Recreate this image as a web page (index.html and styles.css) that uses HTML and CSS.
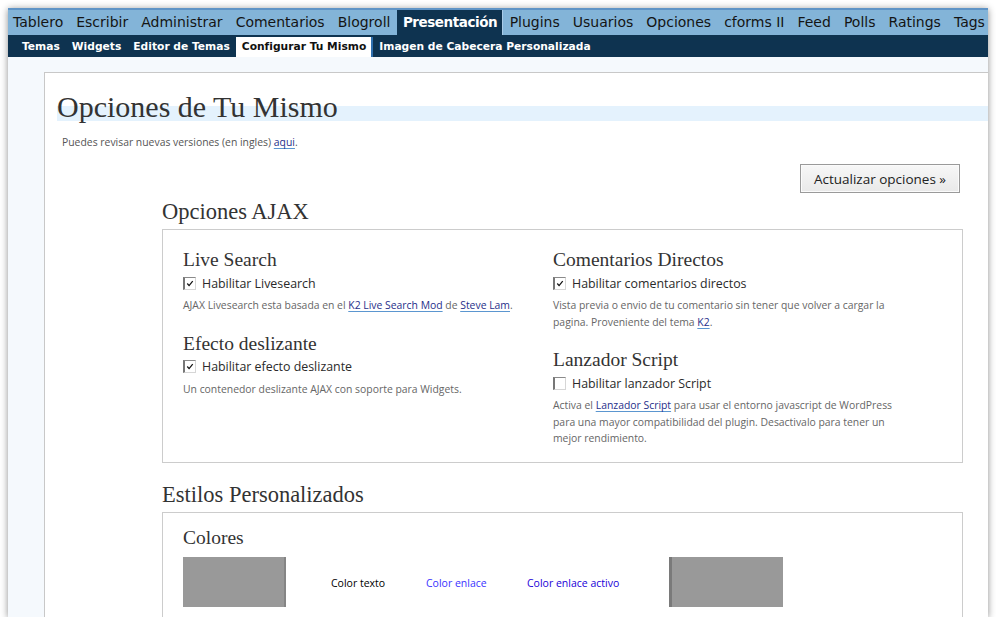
FILE: index.html
```html
<!DOCTYPE html>
<html lang="es">
<head>
<meta charset="utf-8">
<title>Opciones de Tu Mismo</title>
<link rel="stylesheet" href="styles.css">
</head>
<body>
<div class="window">
  <nav class="topnav">
    <a>Tablero</a><a>Escribir</a><a>Administrar</a><a>Comentarios</a><a>Blogroll</a><a class="current">Presentación</a><a>Plugins</a><a>Usuarios</a><a>Opciones</a><a>cforms II</a><a>Feed</a><a>Polls</a><a>Ratings</a><a>Tags</a>
  </nav>
  <nav class="subnav">
    <a>Temas</a><a>Widgets</a><a>Editor de Temas</a><a class="current">Configurar Tu Mismo</a><a>Imagen de Cabecera Personalizada</a>
  </nav>
  <div class="page">
    <div class="panel">
      <h2>Opciones de Tu Mismo</h2>
      <p class="intro">Puedes revisar nuevas versiones (en ingles) <a class="link">aqui</a>.</p>
      <div class="content">
        <div class="actions"><button class="btn">Actualizar opciones »</button></div>

        <h3>Opciones AJAX</h3>
        <div class="box ajax">
          <div class="col">
            <div class="section">
              <h4>Live Search</h4>
              <label class="check"><span class="cb on"><svg viewBox="0 0 11 11" width="11" height="11"><path d="M2.5 5.5 L4.5 7.8 L8.5 2.8" fill="none" stroke="#111" stroke-width="1.4"/></svg></span>Habilitar Livesearch</label>
              <p class="desc">AJAX Livesearch esta basada en el <a class="link">K2 Live Search Mod</a> de <a class="link">Steve Lam</a>.</p>
            </div>
            <div class="section">
              <h4>Efecto deslizante</h4>
              <label class="check"><span class="cb on"><svg viewBox="0 0 11 11" width="11" height="11"><path d="M2.5 5.5 L4.5 7.8 L8.5 2.8" fill="none" stroke="#111" stroke-width="1.4"/></svg></span>Habilitar efecto deslizante</label>
              <p class="desc">Un contenedor deslizante AJAX con soporte para Widgets.</p>
            </div>
          </div>
          <div class="col">
            <div class="section">
              <h4>Comentarios Directos</h4>
              <label class="check"><span class="cb on"><svg viewBox="0 0 11 11" width="11" height="11"><path d="M2.5 5.5 L4.5 7.8 L8.5 2.8" fill="none" stroke="#111" stroke-width="1.4"/></svg></span>Habilitar comentarios directos</label>
              <p class="desc">Vista previa o envio de tu comentario sin tener que volver a cargar la pagina. Proveniente del tema <a class="link">K2</a>.</p>
            </div>
            <div class="section">
              <h4>Lanzador Script</h4>
              <label class="check"><span class="cb"></span>Habilitar lanzador Script</label>
              <p class="desc">Activa el <a class="link">Lanzador Script</a> para usar el entorno javascript de WordPress para una mayor compatibilidad del plugin. Desactivalo para tener un mejor rendimiento.</p>
            </div>
          </div>
        </div>

        <h3>Estilos Personalizados</h3>
        <div class="box styles">
          <h4>Colores</h4>
          <div class="colors">
            <div class="cell"><span class="swatch first"></span></div>
            <div class="cell label text">Color texto</div>
            <div class="cell label linkc">Color enlace</div>
            <div class="cell label active">Color enlace activo</div>
            <div class="cell"><span class="swatch last"></span></div>
          </div>
        </div>
      </div>
    </div>
  </div>
</div>
</body>
</html>
```
FILE: styles.css
```css
html, body {
  margin: 0;
  padding: 0;
  background: #ffffff;
}

.window {
  margin: 8px 0 0 8px;
  width: 980px;
  height: 609px;
  overflow: hidden;
  background: #f5f9fd;
  box-shadow: 0 1px 7px rgba(0, 0, 0, 0.45);
  font-family: "Open Sans", "DejaVu Sans", sans-serif;
}

/* top navigation */
.topnav {
  display: flex;
  height: 25px;
  border-top: 2px solid #5f94c6;
  background: #83b4d8;
  font-family: "DejaVu Sans", sans-serif;
  font-size: 14px;
  line-height: 25px;
}
.topnav a {
  display: block;
  padding: 0 6.5px;
  color: #141414;
  white-space: nowrap;
}
.topnav a:first-child {
  padding-left: 5px;
}
.topnav a.current {
  background: #0e3350;
  color: #ffffff;
  font-weight: bold;
  font-size: 13.5px;
  letter-spacing: -0.45px;
  padding: 0 5px 0 6px;
  border-right: 1px solid #a9cbe8;
}

.subnav {
  display: flex;
  height: 22px;
  background: #0e3350;
  padding-left: 8px;
  font-family: "DejaVu Sans", sans-serif;
  font-size: 10.7px;
  font-weight: bold;
  line-height: 20px;
}
.subnav a {
  display: block;
  padding: 0 6px;
  margin-top: 2px;
  color: #ffffff;
  white-space: nowrap;
}
.subnav a.current {
  background: #ffffff;
  color: #111111;
  border-right: 2px solid #2f6fae;
  padding-right: 5px;
}

/* page */
.page {
  padding: 15px 0 0 36px;
}
.panel {
  width: 960px;
  min-height: 560px;
  background: #ffffff;
  border-top: 1px solid #c8c8c8;
  border-left: 1px solid #c8c8c8;
  padding-left: 12px;
}

h2 {
  margin: 16px 0 0;
  padding: 0;
  font-family: "Liberation Serif", "Times New Roman", serif;
  font-weight: normal;
  font-size: 30px;
  line-height: 36px;
  color: #333333;
  background: linear-gradient(to bottom, transparent 17px, #e4f2fd 17px, #e4f2fd 32px, transparent 32px);
}

.intro {
  margin: 9px 0 0;
  padding-left: 5px;
  font-size: 10.4px;
  line-height: 16px;
  color: #555555;
}

.link {
  color: #1f2f8a;
  text-decoration: underline;
  text-decoration-color: #5b96d0;
  text-underline-offset: 2px;
}

.content {
  margin-left: 105px;
  width: 801px;
}

.actions {
  display: flex;
  justify-content: flex-end;
  margin-top: 14px;
}
.btn {
  height: 29px;
  width: 160px;
  margin-right: 3px;
  padding: 0;
  border: 1px solid #9a9a9a;
  box-shadow: inset 0 0 0 1px #fbfbfb;
  background: linear-gradient(#f7f7f7, #e9e9e9);
  font-family: "Open Sans", "DejaVu Sans", sans-serif;
  font-size: 13.5px;
  color: #222222;
}

h3 {
  margin: 5px 0 0;
  font-family: "Liberation Serif", "Times New Roman", serif;
  font-weight: normal;
  font-size: 22.5px;
  line-height: 28px;
  color: #333333;
}
.box + h3 {
  margin-top: 18px;
}

.box {
  margin-top: 3px;
  border: 1px solid #cccccc;
  background: #ffffff;
}

.ajax {
  display: grid;
  grid-template-columns: 350px 358px;
  column-gap: 20px;
  padding: 18px 20px 15px;
}

.section + .section {
  margin-top: 18px;
}

h4 {
  margin: 0;
  font-family: "Liberation Serif", "Times New Roman", serif;
  font-weight: normal;
  font-size: 19.5px;
  line-height: 24px;
  color: #333333;
}

.check {
  display: flex;
  align-items: center;
  height: 22px;
  font-size: 12.4px;
  color: #2a2a2a;
}
.cb {
  display: inline-flex;
  align-items: center;
  justify-content: center;
  box-sizing: border-box;
  width: 13px;
  height: 13px;
  margin-right: 6px;
  background: #ffffff;
  border-style: solid;
  border-width: 1px 1px 1px 2px;
  border-color: #8a8a8a #d6d6d6 #d6d6d6 #777777;
}

.desc {
  margin: 3px 0 0;
  font-size: 10.4px;
  line-height: 16.5px;
  color: #666666;
}

.styles {
  padding: 13px 20px 20px;
}
.colors {
  display: grid;
  grid-template-columns: 148px 95px 101px 142px 114px;
  align-items: center;
  margin-top: 7px;
  height: 50px;
}
.swatch {
  display: block;
  height: 50px;
  background: #999999;
}
.swatch.first {
  width: 103px;
  box-shadow: inset -2px 0 0 #858585;
}
.swatch.last {
  width: 114px;
  box-shadow: inset 3px 0 0 #7a7a7a;
}
.label {
  font-size: 10.5px;
  line-height: 16px;
  padding-top: 2px;
}
.label.text { color: #000000; }
.label.linkc { color: #3a33ff; }
.label.active { color: #1a00d8; }
```
